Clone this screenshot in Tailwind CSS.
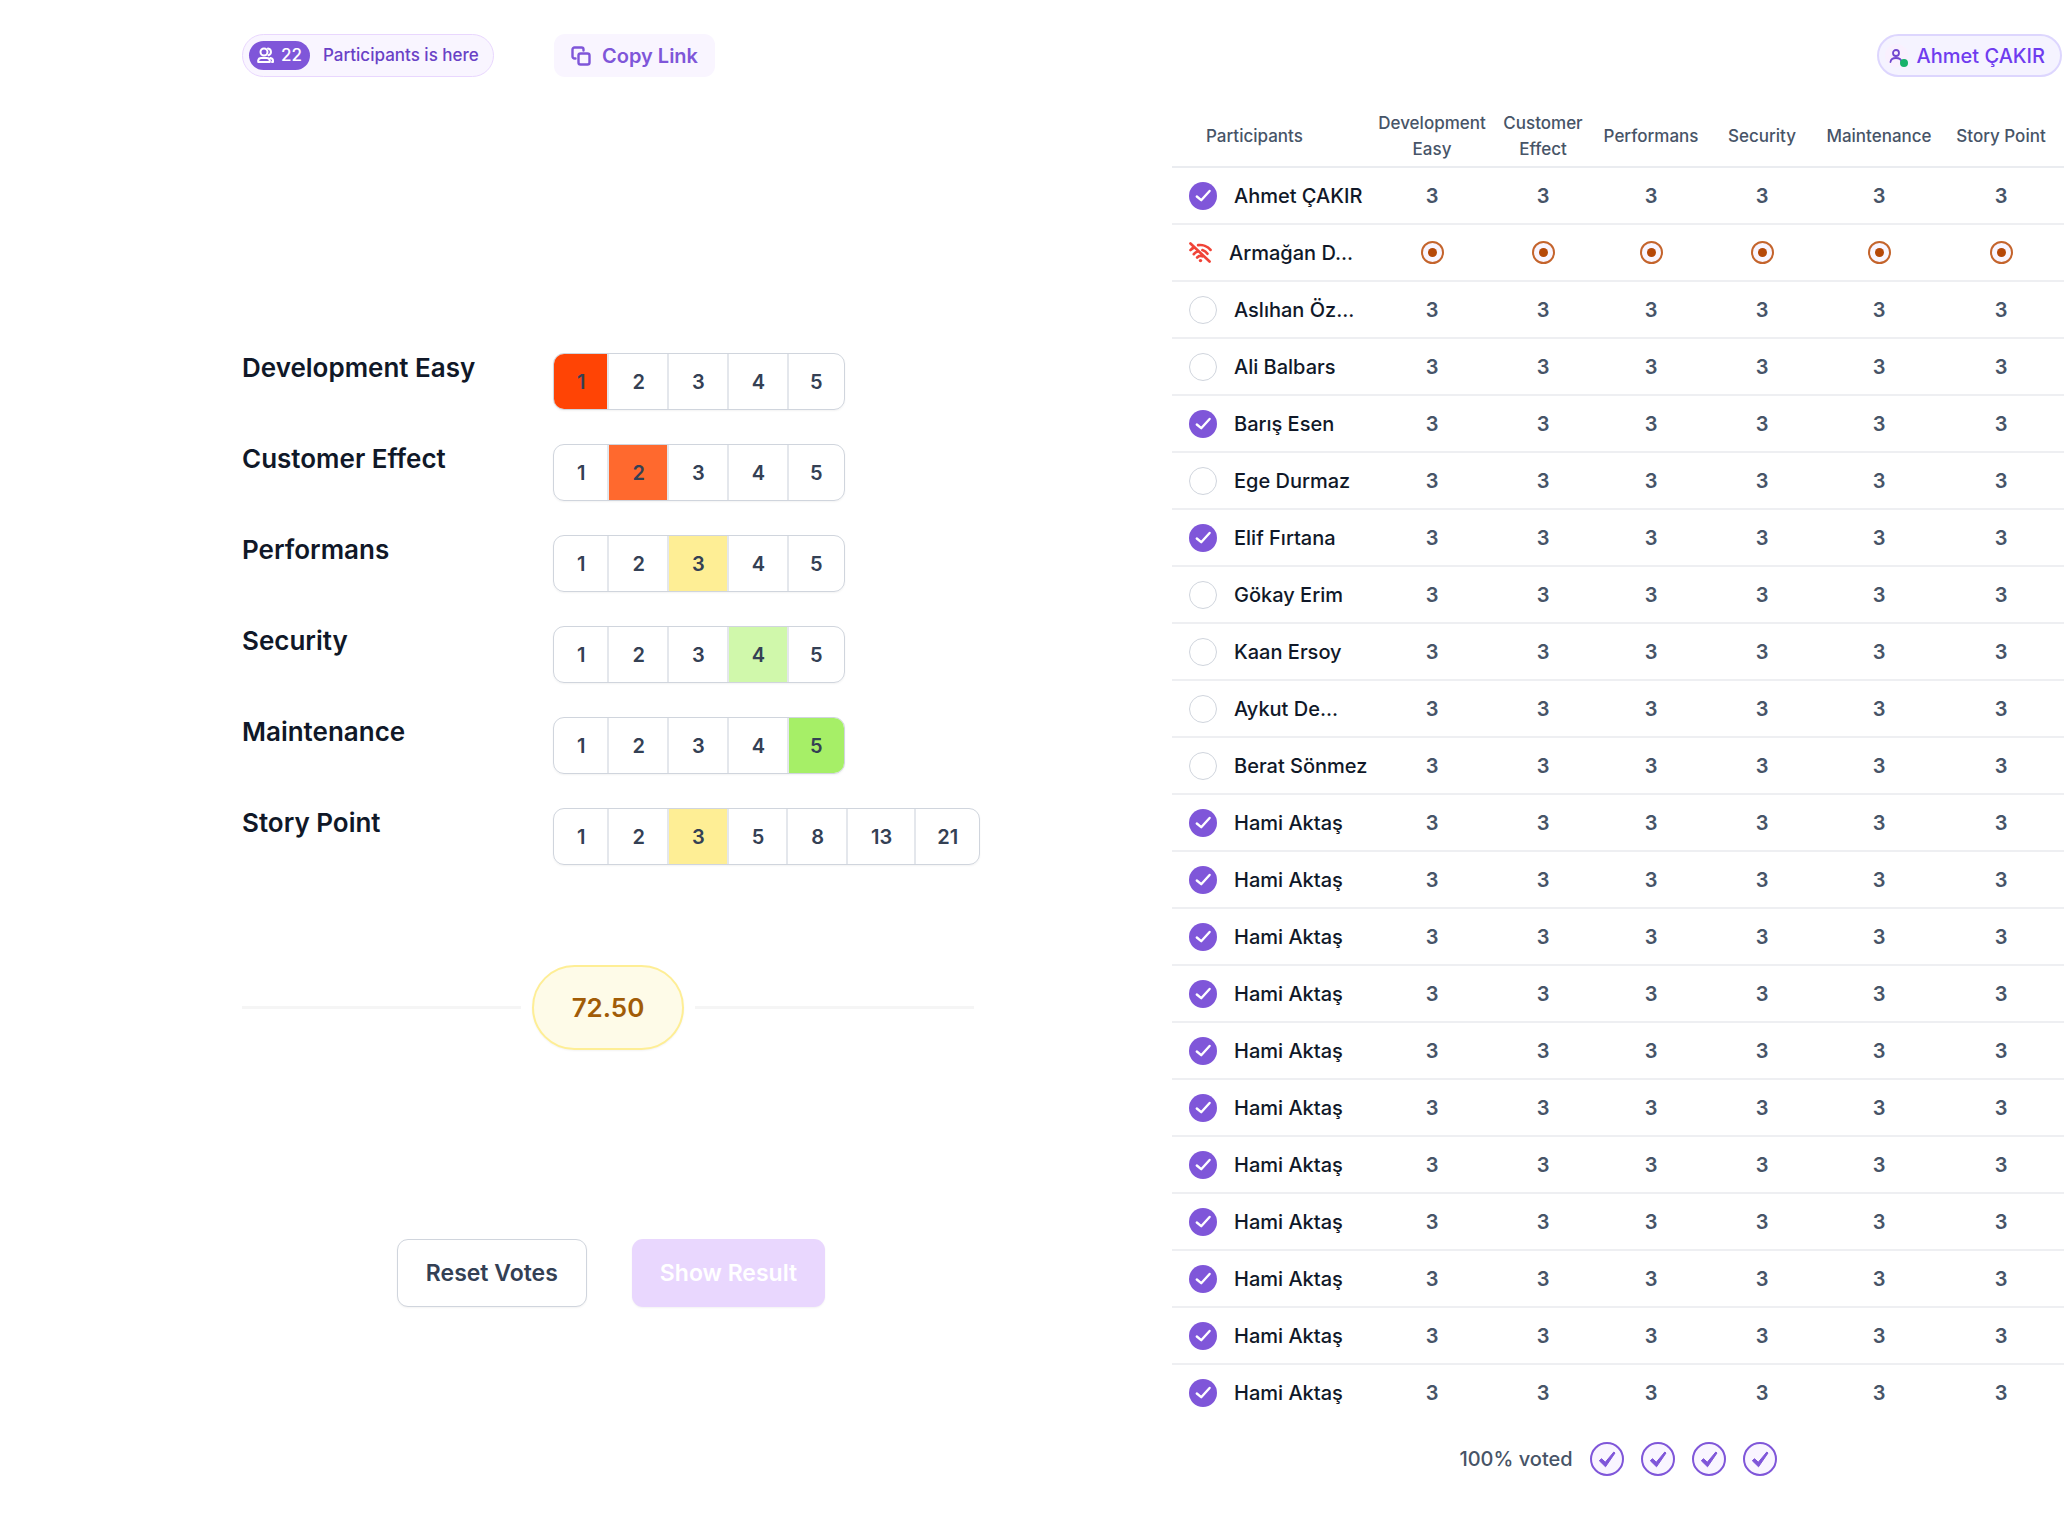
<!DOCTYPE html>
<html lang="en">
<head>
<meta charset="utf-8">
<meta name="viewport" content="width=device-width, initial-scale=1">
<title>Voting room</title>
<script src="https://cdn.jsdelivr.net/npm/@tailwindcss/browser@4"></script>
</head>
<body class="bg-white font-[Inter,sans-serif] text-[#101828]">
<svg class="hidden" aria-hidden="true">
  <symbol id="check" viewBox="0 0 20 20"><path d="M16.6 5 8.2 14.200 3.800 10.500" fill="none" stroke="currentColor" stroke-width="2.400" stroke-linecap="round" stroke-linejoin="round"/></symbol>
  <symbol id="tick" viewBox="0 0 24 24"><path d="M18.800 5 10.300 15.200 6.500 11.700 4.300 13.700 10.500 19.800 20 6Z" fill="currentColor" stroke="currentColor" stroke-width="1" stroke-linejoin="round"/></symbol>
  <symbol id="wifi-off" viewBox="0 0 24 22"><g fill="none" stroke="currentColor" stroke-width="2.800" stroke-linecap="round"><path d="M1.500 1.500 21.500 20.500M1.500 8.500C2.500 7.500 4 6.300 5.500 5.500M9.500 3.300C14 2.500 19.500 4.500 22.500 8.300M5 12.700C6 11.500 7.500 10.500 9 10M14 8.500C16 9.200 18 10.500 19.300 12.300M8.500 16.200C10 14.700 12 14.200 14 15"/></g><circle cx="12" cy="19.500" r="1.800" fill="currentColor"/></symbol>
</svg>
<div class="grid grid-cols-[1172fr_892fr]">
  <main class="pl-[242px] pt-[34px]">
    <header class="flex h-[43px] items-stretch">
      <div class="w-[312px]">
        <div class="flex h-full w-fit items-center gap-[13px] rounded-full border border-[#e9d7fe] bg-[#f9f5ff] pl-[6px] pr-[14px] text-[17px] font-medium text-[#6941c6]">
          <span class="flex h-[29px] items-center gap-[7px] rounded-full bg-[#7f56d9] px-2 text-white">
            <svg class="size-[17px]" viewBox="0 0 17 17" fill="none" stroke="currentColor" stroke-width="2" stroke-linecap="round" stroke-linejoin="round"><circle cx="7" cy="5" r="3.500"/><path d="M1.200 15v-1.500a3 3 0 0 1 3-2.500h5.600a3 3 0 0 1 3 2.500V15ZM11 1.500a3.500 3.500 0 0 1 .5 6.800M13.500 11a3 3 0 0 1 2.500 3v1h-1"/></svg>22</span>
          Participants is here
        </div>
      </div>
      <button type="button" class="flex items-center gap-[11px] rounded-[11px] bg-[#f9f5ff] px-[17px] text-[20px] font-semibold text-[#7f56d9]">
        <svg class="size-5" viewBox="0 0 20 20" fill="none" stroke="currentColor" stroke-width="2.400" stroke-linejoin="round" stroke-linecap="round"><rect x="7.500" y="7.500" width="11" height="11" rx="2"/><path d="M4.500 12.500H3.500a2 2 0 0 1-2-2V3.500a2 2 0 0 1 2-2h7a2 2 0 0 1 2 2v1"/></svg>
        Copy Link
      </button>
    </header>

    <form id="votes" class="mt-[276px] flex flex-col gap-[34px]"></form>

    <div class="mt-[100px] flex max-w-[732px] items-center gap-[11px]">
      <div class="h-[3px] flex-1 bg-[#f5f5f5]"></div>
      <output class="flex h-[85px] w-[152px] items-center justify-center rounded-full border-2 border-[#feee95] bg-[#fefbe8] text-[26px] font-semibold text-[#a15c07] shadow-xs">72.50</output>
      <div class="h-[3px] flex-1 bg-[#f5f5f5]"></div>
    </div>

    <div class="mt-[189px] flex max-w-[738px] justify-center gap-[45px] text-[23px] font-semibold">
      <button type="button" class="h-[68px] rounded-[11px] border border-[#d0d5dd] bg-white px-7 text-[#344054] shadow-xs">Reset Votes</button>
      <button type="button" class="h-[68px] rounded-[11px] bg-[#e9d7fe] px-7 text-white shadow-xs" disabled>Show Result</button>
    </div>
  </main>

  <section class="pt-[34px]">
    <div class="flex justify-end pr-[2px]">
      <button type="button" class="flex h-[43px] items-center gap-[9px] rounded-full border-2 border-[#ddd6fe] bg-[#f5f3ff] pl-[6px] pr-[15px] text-[20px] font-medium text-[#6f3cef]">
        <span class="relative grid size-[23px] place-items-center rounded-full bg-[#f9f0fe] text-[#7047cf]">
          <svg class="size-[14px]" viewBox="0 0 14 14" fill="none" stroke="currentColor" stroke-width="1.800" stroke-linecap="round" stroke-linejoin="round"><circle cx="7" cy="4" r="3"/><path d="M1.500 13c.3-3 2.500-4 5.500-4s5.200 1 5.500 4"/></svg>
          <span class="absolute bottom-0 right-0 size-[8px] rounded-full bg-[#17b26a]"></span>
        </span>
        Ahmet ÇAKIR
      </button>
    </div>
    <table class="mt-8 w-full table-fixed border-collapse text-center">
      <colgroup><col class="w-[204px]"><col class="w-[112px]"><col class="w-[110px]"><col class="w-[106px]"><col class="w-[116px]"><col class="w-[118px]"><col class="w-[126px]"></colgroup>
      <thead class="text-[17px] leading-[26px] text-[#475467]">
        <tr class="h-[58px] border-b-2 border-[#eaecf0]">
          <th scope="col" class="pb-1 pl-[34px] text-left font-medium">Participants</th>
          <th scope="col" class="pb-1 font-medium">Development Easy</th>
          <th scope="col" class="pb-1 font-medium">Customer Effect</th>
          <th scope="col" class="pb-1 font-medium">Performans</th>
          <th scope="col" class="pb-1 font-medium">Security</th>
          <th scope="col" class="pb-1 font-medium">Maintenance</th>
          <th scope="col" class="pb-1 font-medium">Story Point</th>
        </tr>
      </thead>
      <tbody id="people" class="text-[20px] leading-7"></tbody>
    </table>
    <div class="mt-[21px] flex items-center justify-center gap-[17px]">
      <span class="text-[20px] font-medium text-[#475467]">100% voted</span>
      <span id="ticks" class="flex gap-[17px]"></span>
    </div>
  </section>
</div>
<script>
const criteria = [
  ['Development Easy', [1,2,3,4,5], 1, 'has-[:checked]:bg-[#ff4405]'],
  ['Customer Effect', [1,2,3,4,5], 2, 'has-[:checked]:bg-[#ff692e]'],
  ['Performans', [1,2,3,4,5], 3, 'has-[:checked]:bg-[#feee95]'],
  ['Security', [1,2,3,4,5], 4, 'has-[:checked]:bg-[#d0f8ab]'],
  ['Maintenance', [1,2,3,4,5], 5, 'has-[:checked]:bg-[#a6ef67]'],
  ['Story Point', [1,2,3,5,8,13,21], 3, 'has-[:checked]:bg-[#feee95]'],
];
document.getElementById('votes').innerHTML = criteria.map(([name, values, picked, tint], i) => `
  <div role="radiogroup" aria-labelledby="c${i}" class="flex items-start">
    <span id="c${i}" class="w-[311px] text-[26px] leading-[30px] font-semibold">${name}</span>
    <div class="flex h-[57px] divide-x-2 divide-[#e4e7ec] overflow-hidden rounded-[11px] border border-[#d0d5dd] text-[20px] font-semibold text-[#344054] shadow-xs">
      ${values.map(v => `<label class="relative flex items-center pl-[23px] pr-[22px] last:px-[21px] ${tint}"><input type="radio" name="c${i}" value="${v}" class="sr-only" ${v === picked ? 'checked' : ''}>${v}</label>`).join('')}
    </div>
  </div>`).join('');

const voted = '<span class="grid size-7 shrink-0 place-items-center rounded-full bg-[#7f56d9] text-white"><svg class="size-5"><use href="#check"/></svg></span>';
const waiting = '<span class="size-7 shrink-0 rounded-full border border-[#d0d5dd]"></span>';
const offline = '<svg class="h-[21px] w-[23px] shrink-0 text-[#f04438]"><use href="#wifi-off"/></svg>';
const pending = '<span class="mx-auto grid size-[23px] place-items-center rounded-full border-2 border-[#c4642c] bg-[#f9f5ff]"><span class="size-[9px] rounded-full bg-[#b54708]"></span></span>';
const people = [
  ['Ahmet ÇAKIR', voted], ['Armağan D...', offline], ['Aslıhan Öz...', waiting], ['Ali Balbars', waiting],
  ['Barış Esen', voted], ['Ege Durmaz', waiting], ['Elif Fırtana', voted], ['Gökay Erim', waiting],
  ['Kaan Ersoy', waiting], ['Aykut De...', waiting], ['Berat Sönmez', waiting],
  ...Array.from({ length: 11 }, () => ['Hami Aktaş', voted]),
];
document.getElementById('people').innerHTML = people.map(([name, icon]) => `
  <tr class="h-[57px] border-b-2 border-[#eeeff2] last:border-0">
    <th scope="row" class="pl-[17px] font-medium"><div class="flex items-center gap-[17px] whitespace-nowrap">${icon}${name}</div></th>
    ${`<td class="font-semibold text-[#475467]">${icon === offline ? pending : '3'}</td>`.repeat(6)}
  </tr>`).join('');
document.getElementById('ticks').innerHTML = '<span class="grid size-[34px] place-items-center rounded-full border-2 border-[#7f56d9] bg-[#f9f5ff] text-[#7f56d9]"><svg class="size-6"><use href="#tick"/></svg></span>'.repeat(4);
</script>
</body>
</html>
